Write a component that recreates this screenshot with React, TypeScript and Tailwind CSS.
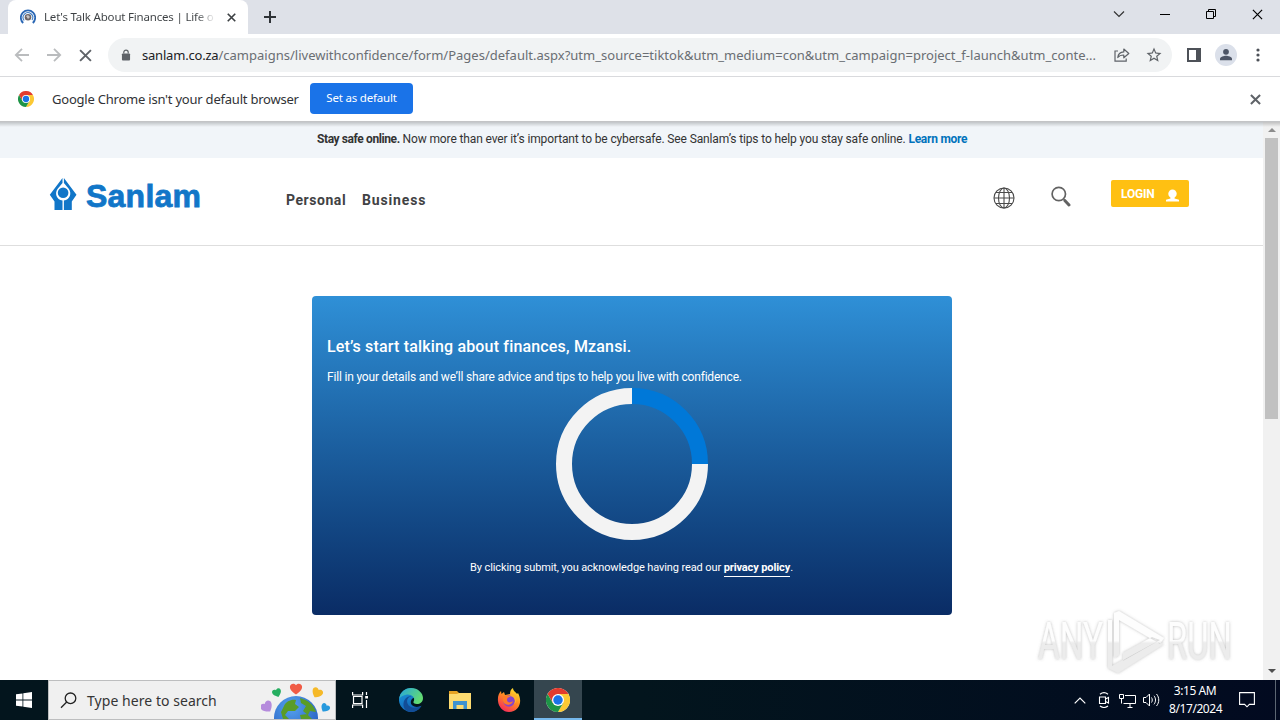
import React from 'react'

const ChromeLogo: React.FC<{ className: string }> = ({ className }) => (
  <svg viewBox="0 0 48 48" className={className}>
    <circle cx="24" cy="24" r="24" fill="#fff" />
    <path d="M24 12h20.8A24 24 0 0 0 3.2 12l10.4 18z" fill="#e33b2e" />
    <path d="M34.4 30L24 48A24 24 0 0 0 44.8 12H24z" fill="#fcc934" />
    <path d="M13.6 30L3.2 12A24 24 0 0 0 24 48l10.4-18z" fill="#1e9447" />
    <circle cx="24" cy="24" r="12" fill="#fff" />
    <circle cx="24" cy="24" r="9.5" fill="#1a73e8" />
  </svg>
)

const CloseIcon: React.FC<{ className: string; width: number }> = ({ className, width }) => (
  <svg viewBox="0 0 12 12" className={className} stroke="currentColor" strokeWidth={width} fill="none">
    <path d="M1 1l10 10M11 1L1 11" />
  </svg>
)

const TabStrip: React.FC = () => (
  <div className="flex h-[34px] bg-[#dee1e8]">
    <div className="ml-2 flex h-[34px] w-[240px] items-center rounded-t-lg bg-white pl-3">
      <svg viewBox="0 0 16 16" className="h-4 w-4 shrink-0" fill="none">
        <path d="M3.2 14A7.2 7.2 0 1 1 12.8 14" stroke="#2c68b5" strokeWidth="1.8" />
        <path d="M4.2 11.5A4.8 4.8 0 1 1 12 11" stroke="#3c7cc4" strokeWidth="1.1" />
        <circle cx="8" cy="8.3" r="3.3" fill="#6d6668" />
        <path d="M6 7l2-1 2 2-2 2z" fill="#c9c4c4" />
      </svg>
      <span className="ml-2 w-[172px] shrink-0 bg-gradient-to-r from-[#3c4043] from-88% to-transparent bg-clip-text text-[11.5px] tracking-[-0.19px] whitespace-nowrap text-transparent">
        Let's Talk About Finances | Life o
      </span>
      <CloseIcon className="ml-[11px] h-[9px] w-[9px] text-[#3c4043]" width={2.2} />
    </div>
    <svg viewBox="0 0 12 12" className="mt-[11px] ml-4 h-3 w-3" stroke="#2f3337" strokeWidth="2">
      <path d="M6 0v12M0 6h12" />
    </svg>
    <div className="mr-[17px] ml-auto flex items-center pb-[7px] text-black">
      <svg viewBox="0 0 12 8" className="mr-[35px] h-[8px] w-3" fill="none" stroke="#333" strokeWidth="1.2">
        <path d="M1 1.5l5 5 5-5" />
      </svg>
      <div className="mr-[36px] mt-[2px] h-px w-[10px] bg-black" />
      <svg viewBox="0 0 10 10" className="mr-[36px] h-[10px] w-[10px]" fill="none" stroke="#000">
        <path d="M.5 2.5h7v7h-7zM2.5 2.5v-2h7v7h-2" />
      </svg>
      <CloseIcon className="mt-px h-[11px] w-[11px]" width={1.3} />
    </div>
  </div>
)

const Toolbar: React.FC = () => (
  <div className="flex h-[43px] items-center border-b border-[#d9dadd] bg-white pl-[14px]">
    <svg viewBox="0 0 16 14" className="h-[14px] w-4" fill="none" stroke="#babcbe" strokeWidth="1.8">
      <path d="M15 7H2M8 .8L1.8 7 8 13.2" />
    </svg>
    <svg viewBox="0 0 16 14" className="ml-4 h-[14px] w-4" fill="none" stroke="#babcbe" strokeWidth="1.8">
      <path d="M1 7h13M8 .8L14.2 7 8 13.2" />
    </svg>
    <CloseIcon className="ml-[17px] h-[13px] w-[13px] text-[#5f6368]" width={1.8} />
    <div className="ml-4 flex h-[34px] w-[1064px] items-center rounded-full bg-[#f1f3f4] pl-[13px]">
      <svg viewBox="0 0 10 13" className="h-3 w-[10px]">
        <path d="M2.6 5V3.6a2.4 2.4 0 0 1 4.8 0V5" fill="none" stroke="#5f6368" strokeWidth="1.3" />
        <rect x=".6" y="4.8" width="8.8" height="7.7" rx="1" fill="#5f6368" />
      </svg>
      <span className="mt-[2px] ml-[11px] w-[956px] shrink-0 text-[13px] tracking-[0.01px] whitespace-nowrap text-[#6a6e73]">
        <span className="tracking-[-0.2px] text-[#202124]">sanlam.co.za</span>
        /campaigns/livewithconfidence/form/Pages/default.aspx?utm_source=tiktok&amp;utm_medium=con&amp;utm_campaign=project_f-launch&amp;utm_conte...
      </span>
      <svg viewBox="0 0 16 14" className="ml-4 h-[14px] w-4 shrink-0" fill="none" stroke="#5f6368" strokeWidth="1.2">
        <path d="M4 3H1v10.2h11.2V10.500" />
        <path d="M3.800 9.500c.3-3.500 2.500-5.400 6-5.600V1l5 4.500-5 4.300V7C7 7 5.200 7.600 3.800 9.500z" strokeLinejoin="round" />
      </svg>
      <svg viewBox="0 0 24 24" className="ml-[15px] h-[18px] w-[18px] shrink-0" fill="#5f6368">
        <path d="M22 9.240l-7.190-.620L12 2 9.190 8.630 2 9.240l5.460 4.730L5.820 21 12 17.270 18.180 21l-1.630-7.030zM12 15.400l-3.760 2.270 1-4.280-3.320-2.880 4.380-.380L12 6.100l1.710 4.040 4.380.380-3.320 2.880 1 4.280z" />
      </svg>
    </div>
    <svg viewBox="0 0 14 14" className="ml-[15px] h-[14px] w-[14px]">
      <path d="M0 0h14v14H0zM2 2v10h7V2z" fill="#4d5158" fillRule="evenodd" />
    </svg>
    <svg viewBox="0 0 22 22" className="ml-[14px] h-[22px] w-[22px]">
      <circle cx="11" cy="11" r="11" fill="#dbe0ea" />
      <circle cx="11" cy="7.800" r="2.900" fill="#4d5566" />
      <path d="M5 16.200v-1.500c0-2 4-3 6-3s6 1 6 3v1.500z" fill="#4d5566" />
    </svg>
    <svg viewBox="0 0 4 14" className="ml-[19px] h-[14px] w-1" fill="#4d5158">
      <circle cx="2" cy="2" r="1.600" />
      <circle cx="2" cy="7" r="1.600" />
      <circle cx="2" cy="12" r="1.600" />
    </svg>
  </div>
)

const DefaultBrowserBar: React.FC = () => (
  <div className="flex h-[45px] items-center border-b border-[#c3c4c6] bg-white pl-[18px]">
    <ChromeLogo className="h-4 w-4" />
    <span className="mt-px ml-[18px] w-[258px] text-[13px] tracking-[-0.22px] whitespace-nowrap text-[#303236]">
      Google Chrome isn't your default browser
    </span>
    <button className="mb-px h-[31px] w-[103px] rounded bg-[#1a73e8] pb-[2px] text-[11.5px] tracking-[-0.2px] whitespace-nowrap text-white">
      Set as default
    </button>
    <CloseIcon className="mr-[19px] ml-auto h-[11px] w-[11px] text-[#5f6368]" width={2.2} />
  </div>
)

const SiteHeader: React.FC = () => (
  <div className="flex h-[88px] border-b border-[#dedede] bg-white">
    <svg viewBox="0 0 154 36" className="mt-[18px] ml-[49px] h-9 w-[154px]" fill="#1176c8">
      <path d="M13.500 2v5L8.500 13c-3 4.500-1.200 10.500 5 11.500V34H5.500v-8.500L.8 18.800z" />
      <path d="M14.900 2v5l5 6c3 4.500 1.200 10.500-5 11.500V34h7.900v-8.500l4.700-6.700z" />
      <circle cx="14.100" cy="16.800" r="5.300" />
      <text
        x="37"
        y="31"
        fontFamily="Liberation Sans, sans-serif"
        fontWeight="700"
        fontSize="32"
        textLength="115"
        stroke="#1176c8"
        strokeWidth=".8"
      >
        Sanlam
      </text>
    </svg>
    <nav className="mt-8 ml-[83px] flex gap-4 text-[14px] font-bold text-[#414244]">
      <span className="w-[60px] tracking-[0.55px]">Personal</span>
      <span className="w-[66px] tracking-[0.85px]">Business</span>
    </nav>
    <svg viewBox="0 0 22 22" className="mt-[29px] ml-auto h-[22px] w-[22px]" fill="none" stroke="#4a4a4a" strokeWidth="1.100">
      <circle cx="11" cy="11" r="10" />
      <ellipse cx="11" cy="11" rx="5.500" ry="10" />
      <path d="M11 1v20M1 11h20M2.800 5.500h16.400M2.800 16.500h16.400" />
    </svg>
    <svg viewBox="0 0 20 21" className="mt-[28px] ml-[36px] h-[21px] w-5" fill="none" stroke="#626262">
      <circle cx="7.800" cy="8" r="6.700" strokeWidth="1.700" />
      <path d="M12.700 13.200l1.500 1.700" strokeWidth="1.500" />
      <path d="M14 14.700l4 4.300" strokeWidth="3" strokeLinecap="round" />
    </svg>
    <button className="mt-[22px] mr-[74px] ml-10 flex h-[27px] w-[78px] items-center rounded-[2px] bg-[#ffc012] pl-[10px] text-[12px] font-bold tracking-[-0.2px] text-white">
      <span className="w-[45px] text-left">LOGIN</span>
      <svg viewBox="0 0 13 13" className="mt-[3px] h-[13px] w-[13px]" fill="#fff">
        <ellipse cx="6.500" cy="4.700" rx="4.200" ry="4.300" />
        <path d="M4.500 8h4v1.500L13 10.700V12.500H0v-1.800l4.500-1.200z" />
      </svg>
    </button>
  </div>
)

const FormCard: React.FC = () => (
  <div className="mt-[50px] ml-[312px] h-[319px] w-[640px] rounded bg-gradient-to-b from-[#2f90d7] to-[#0a2c65] px-[15px] text-white">
    <h1 className="pt-[39px] text-[16px] leading-6 font-medium tracking-[0.17px]">
      Let’s start talking about finances, Mzansi.
    </h1>
    <p className="mt-2 text-[12px] leading-5 tracking-[-0.185px]">
      Fill in your details and we’ll share advice and tips to help you live with confidence.
    </p>
    <svg viewBox="0 0 152 152" className="mx-auto mt-px h-[152px] w-[152px]" fill="none" strokeWidth="16">
      <path d="M144 76a68 68 0 1 1-68-68" stroke="#f3f3f3" />
      <path d="M76 8a68 68 0 0 1 68 68" stroke="#0078d8" />
    </svg>
    <p className="mt-5 pr-px text-center text-[11px] leading-4 tracking-[-0.11px] whitespace-nowrap">
      By clicking submit, you acknowledge having read our{' '}
      <a className="inline-block border-b border-white font-bold">privacy policy</a>.
    </p>
  </div>
)

const Watermark: React.FC = () => (
  <svg viewBox="0 0 210 70" className="absolute top-[483px] left-[1034px] h-[70px] w-[210px]">
    <defs>
      <linearGradient id="mark" x1="0" y1="0" x2="0" y2="1">
        <stop offset=".48" stopColor="#fdfdfd" />
        <stop offset=".52" stopColor="#ececec" />
      </linearGradient>
      <filter id="halo" x="-10%" y="-20%" width="120%" height="140%">
        <feDropShadow dx="0" dy="0" stdDeviation="1.500" floodColor="#777" floodOpacity=".5" />
      </filter>
    </defs>
    <g filter="url(#halo)" fill="url(#mark)" fontFamily="Roboto, sans-serif" fontSize="52">
      <text transform="translate(4 54) scale(.64 1)">ANY</text>
      <text transform="translate(133 54) scale(.63 1)">RUN</text>
      <path fillRule="evenodd" d="M80 8l5-2 45 27-4 6-41-24v35l-5 3zM89 48l29-16 8 3-37 21zM74 15h4v46l44-24 8 2-46 29-10-5z" />
    </g>
  </svg>
)

const EarthDoodle: React.FC = () => (
  <svg viewBox="0 0 70 38" className="ml-auto h-[38px] w-[70px]">
    <defs>
      <radialGradient id="sea" cx=".4" cy=".25" r=".8">
        <stop offset="0" stopColor="#55a2ee" />
        <stop offset="1" stopColor="#2458bd" />
      </radialGradient>
      <path id="heart" d="M0 5.500C-4 3-6.500 0-6-2.800-5.500-5.500-2-6.300 0-3.800 2-6.300 5.500-5.500 6-2.800 6.500 0 4 3 0 5.500z" />
    </defs>
    <circle cx="35" cy="37" r="22" fill="url(#sea)" />
    <path
      d="M23 25c2-5 8-7 12-6l-1 4 4 3-4 4-7 0-3 4 4 4h-6l-2-7zM39 17c8 2 14 7 16 14l-6-1-2 4-5-4 3-5-5-3zM39 34l7-1 5 5H40z"
      fill="#5a9c27"
    />
    <use href="#heart" transform="translate(35 8)" fill="#f05b45" />
    <use href="#heart" transform="translate(56 12) rotate(30) scale(.9)" fill="#f5b928" />
    <use href="#heart" transform="translate(16 12) rotate(-20) scale(.75)" fill="#26ae60" />
    <use href="#heart" transform="translate(64 27) rotate(35) scale(.75)" fill="#2699dd" />
    <use href="#heart" transform="translate(6 26) rotate(-35)" fill="#b58bdc" />
  </svg>
)

const EdgeIcon: React.FC = () => (
  <svg viewBox="0 0 24 24" className="h-6 w-6">
    <defs>
      <linearGradient id="edge-top" x1="0" y1="0" x2="1" y2=".5">
        <stop offset="0" stopColor="#24a4e0" />
        <stop offset="1" stopColor="#63dc72" />
      </linearGradient>
      <linearGradient id="edge-low" x1="0" y1="0" x2=".5" y2="1">
        <stop offset="0" stopColor="#1b9de0" />
        <stop offset="1" stopColor="#1261b4" />
      </linearGradient>
    </defs>
    {/* body with a notch on the lower right */}
    <path d="M12 0a12 12 0 1 0 10.500 17.800c-3 1.500-7 1.500-9-.3-2.500-2-2-5 0-7L22 7A12 12 0 0 0 12 0z" fill="url(#edge-low)" />
    <path d="M12.500 8.500c-4 0-5 4-4 7 1.500 4 7 6 14 2.300-2 3.800-6 6.200-10 6.200C7 24 4 20 4.500 15.500 5 11 9 7.500 12.500 8.500z" fill="#124d96" />
    <path d="M.2 11C1 4 6 0 12 0c7 0 12 5 12 10 0 4-3 6-6 6-2.800 0-4-1.200-3.500-2.300C17 9 12 6 8 6.500 4 7 1 9 .2 11z" fill="url(#edge-top)" />
  </svg>
)

const FirefoxIcon: React.FC = () => (
  <svg viewBox="0 0 24 24" className="h-6 w-6">
    <defs>
      <linearGradient id="fox" x1=".8" y1="0" x2=".2" y2="1">
        <stop offset="0" stopColor="#ffe92f" />
        <stop offset=".45" stopColor="#ff8b22" />
        <stop offset="1" stopColor="#f5225f" />
      </linearGradient>
    </defs>
    <path d="M1 13C.5 8 2 5 4 3l.5 3L7 4l1 3 5-1c0-3 1-5 3-6 0 3 3 4 4 6l1-1c5 9 1 19-9 19C6 24 1.500 19 1 13z" fill="url(#fox)" />
    <circle cx="12" cy="13" r="5.800" fill="#8744cc" />
    <path d="M6 9c3-2 6-2 7 0-2 0-3 1-3 3 0 3 4 3 6 1-1 5-9 5-10 0z" fill="#ff7b27" />
    <path d="M11 9c5-3 9 3 6 7 3-1 4-8-1-10z" fill="#ffb12b" />
  </svg>
)

const Taskbar: React.FC = () => (
  <div className="flex h-10 items-center bg-gradient-to-r from-[#03151d] via-[#03151d] to-[#020a20] text-white">
    <svg viewBox="0 0 16 16" className="mx-4 h-4 w-4" fill="#fff">
      <path d="M0 2.300L6.500 1.400v6.200H0zM7.300 1.300L16 0v7.600H7.300zM0 8.400h6.500v6.200L0 13.700zM7.300 8.400H16V16l-8.700-1.300z" />
    </svg>
    <div className="flex h-10 w-72 items-center border border-[#bdbebf] bg-[#f0f0f0] pl-[11px]">
      <svg viewBox="0 0 17 17" className="h-[17px] w-[17px]" fill="none" stroke="#222" strokeWidth="1.300">
        <circle cx="10.500" cy="6.300" r="5.300" />
        <path d="M6.700 10L1 15.800" />
      </svg>
      <span className="ml-[10px] text-[14px] tracking-[0.05px] whitespace-nowrap text-[#353535]">Type here to search</span>
      <div className="mr-[4px] ml-auto">
        <EarthDoodle />
      </div>
    </div>
    <svg viewBox="0 0 17 16" className="ml-4 h-4 w-[17px]" fill="none" stroke="#fff" strokeWidth="1.200">
      <path d="M.6 0v3h10V0M.6 16v-3h10v3M1.500 4.500v7h8.500v-7zM14.500 0v3M14.500 8v8" />
      <path d="M13.200 4h2.800v2.500h-2.800z" fill="#fff" stroke="none" />
    </svg>
    <div className="ml-[17px] flex">
      <div className="flex h-10 w-12 items-center justify-center pl-[2px]">
        <EdgeIcon />
      </div>
      <div className="flex h-10 w-12 items-center justify-center pl-[4px]">
        <svg viewBox="0 0 22 18" className="h-[18px] w-[22px]">
          <path d="M0 0h8l2 2h11v5H0z" fill="#e6a323" />
          <path d="M0 3h8l2-1h12v16H0z" fill="#fddb70" />
          <path d="M4 10h14v8h-3.500v-4h-7v4H4z" fill="#3f93cf" />
        </svg>
      </div>
      <div className="flex h-10 w-12 items-center justify-center pl-[6px]">
        <FirefoxIcon />
      </div>
      <div className="ml-[4px] flex h-10 w-12 items-center justify-center border-b-2 border-[#76b9ed] bg-[#35464f] pt-[2px]">
        <ChromeLogo className="h-6 w-6" />
      </div>
    </div>
    <div className="ml-auto flex h-10 items-center">
      <svg viewBox="0 0 12 7" className="h-[7px] w-3" fill="none" stroke="#fff" strokeWidth="1.200">
        <path d="M.7 6.300L6 1l5.300 5.300" />
      </svg>
      <svg viewBox="0 0 12 16" className="ml-3 h-4 w-3" fill="none" stroke="#fff" strokeWidth="1.100">
        <path d="M1.500 5h6v6.500h-6zM7.500 7l3-1.500V11l-3-1.500M2 2.200c2.500-1.900 5.500-1.900 8 0M2 14c2.500 1.900 5.500 1.900 8 0" />
      </svg>
      <svg viewBox="0 0 17 15" className="ml-[9px] h-[15px] w-[17px]" fill="none" stroke="#fff">
        <path d="M6 2.500h10.500v8H4.500M8.500 14.500h5M11 10.500v4M.5 1.500h4v4h-4zM2.500 5.500v5" />
      </svg>
      <svg viewBox="0 0 17 14" className="ml-[7px] h-[14px] w-[17px]" fill="none" stroke="#fff">
        <path d="M.5 4.500H3l3.500-3.500v12L3 9.500H.5zM8.500 4.500c1 1.500 1 3.500 0 5M11 2.800c2 2.500 2 6 0 8.500M13.500 1c3 3.500 3 8.500 0 12" />
      </svg>
      <div className="ml-[9px] w-[52px] text-center text-[12px] leading-[18px] tracking-[-0.42px] whitespace-nowrap">
        <div>3:15 AM</div>
        <div>8/17/2024</div>
      </div>
      <svg viewBox="0 0 16 16" className="ml-[18px] h-4 w-4" fill="none" stroke="#fff" strokeWidth="1.100">
        <path d="M.6.6h14.800v11.800h-5L8 14.800l-2.400-2.400h-5z" />
      </svg>
      <div className="ml-5 h-10 w-[5px] border-l border-[#5c6673]" />
    </div>
  </div>
)

const App: React.FC = () => {
  return (
    <div className="h-[720px] w-[1280px] overflow-hidden bg-white font-['Noto_Sans',sans-serif]">
      <TabStrip />
      <Toolbar />
      <DefaultBrowserBar />
      <div className="relative flex h-[558px] font-['Roboto',sans-serif]">
        <div className="w-[1263px] shrink-0">
          <div className="h-[36px] bg-[#f1f5f9] pt-[7px] pl-[317px] text-[12px] leading-5 tracking-[-0.13px] whitespace-nowrap text-[#333]">
            <b className="tracking-[-0.4px]">Stay safe online.</b> Now more than ever it’s important to be cybersafe. See
            Sanlam’s tips to help you stay safe online. <b className="tracking-[-0.25px] text-[#0072bc]">Learn more</b>
          </div>
          <SiteHeader />
          <FormCard />
        </div>
        <div className="flex w-[17px] flex-col items-center bg-[#f1f1f1]">
          <svg viewBox="0 0 8 4" className="mt-[6px] h-1 w-2" fill="#8c8c8c">
            <path d="M0 4l4-4 4 4z" />
          </svg>
          <div className="mt-[6px] h-[281px] w-[13px] bg-[#c1c1c1]" />
          <svg viewBox="0 0 8 4" className="mt-auto mb-[7px] h-1 w-2" fill="#505050">
            <path d="M0 0l4 4 4-4z" />
          </svg>
        </div>
        <div className="absolute top-0 left-0 h-[5px] w-full bg-gradient-to-b from-black/20 to-transparent" />
        <Watermark />
      </div>
      <Taskbar />
    </div>
  )
}

export default App
